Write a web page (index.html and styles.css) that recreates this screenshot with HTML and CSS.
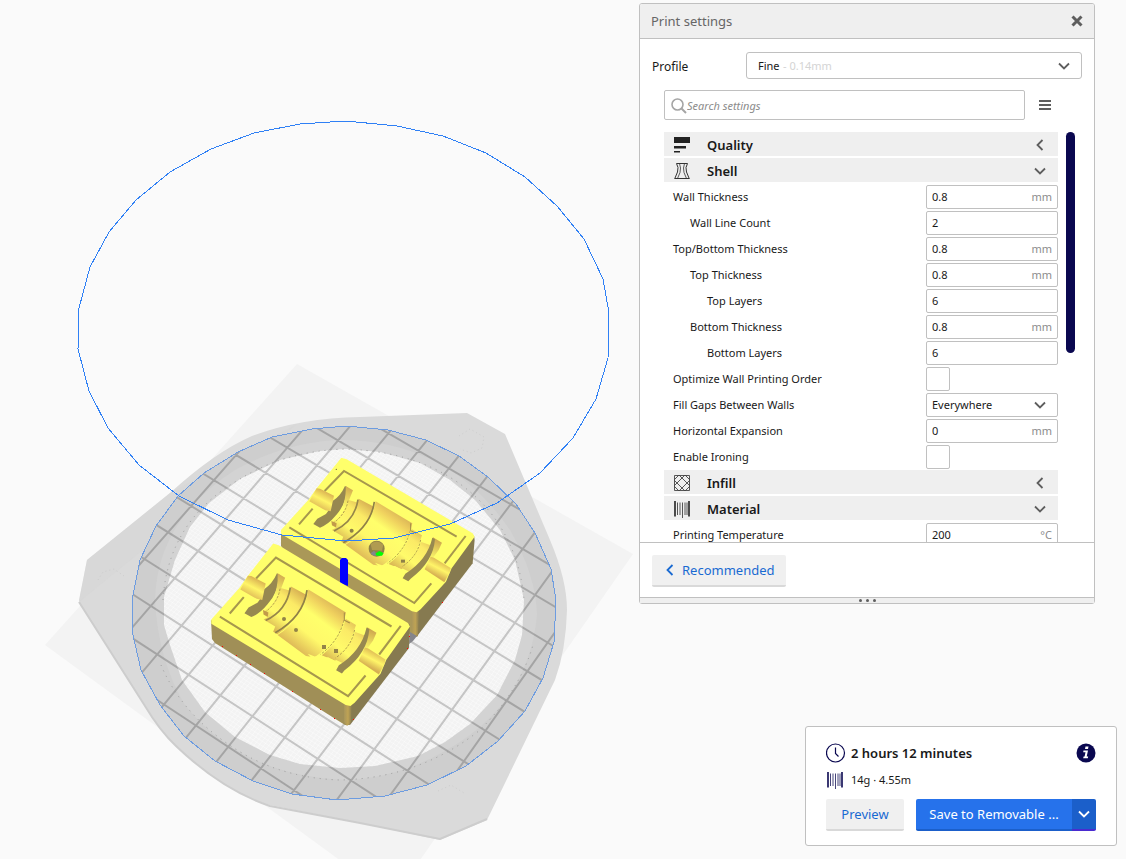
FILE: index.html
```html
<!DOCTYPE html>
<html lang="en">
<head>
<meta charset="utf-8">
<title>Print settings</title>
<link rel="stylesheet" href="styles.css">
</head>
<body>
<svg width="0" height="0" class="sprite" aria-hidden="true">
  <symbol id="chev-down" viewBox="0 0 14 14"><path d="M2 4.500l5 5 5-5" fill="none" stroke="currentColor" stroke-width="1.800"/></symbol>
  <symbol id="chev-left" viewBox="0 0 14 14"><path d="M9.500 2l-5 5 5 5" fill="none" stroke="currentColor" stroke-width="1.800"/></symbol>
  <symbol id="spool" viewBox="0 0 16 18"><path d="M0.200 1h1.600v15.500H0.200zM14.200 1h1.600v15.500h-1.600z" fill="currentColor"/><path d="M3.500 2.500v12.500M6 2.500v12.500M8.500 2.500v15.500M11 2.500v12.500M13 2.500v12.500" stroke="currentColor" stroke-width="1" opacity=".75"/></symbol>
</svg>

<main class="stage">
  <svg class="scene" viewBox="0 0 1126 859" preserveAspectRatio="xMinYMin slice" role="img" aria-label="Build plate with two mould halves">
    <defs>
      <polygon id="bed-shape" points="346,426 388,430 426,440 459,456 488,477 516,504 535,533 551,569 556,600 554,642 543,678 525,711 498,741 466,766 427,785 385,796 337,800 292,794 253,781 215,761 184,736 160,705 141,670 132,631 132,600 140,560 156,526 178,496 204,473 238,452 272,437 312,429"/>
      <polygon id="bed-inner" points="164,597 175,560 190,527 209,503 240,479 280,460 320,451 345,449 380,452 420,463 450,480 475,500 500,530 515,560 524,600 522,635 515,660 497,695 470,724 445,742 418,756 375,766 340,768 300,764 270,755 235,737 205,712 182,680 170,645 164,625"/>
      <clipPath id="bed-clip"><use href="#bed-shape"/></clipPath>
      <clipPath id="inner-clip"><use href="#bed-inner"/></clipPath>
      <linearGradient id="body" gradientUnits="userSpaceOnUse" x1="590" y1="215" x2="485" y2="355">
        <stop offset="0" stop-color="#dcb757"/><stop offset=".14" stop-color="#efd05e"/><stop offset=".36" stop-color="#ffff6b"/><stop offset=".66" stop-color="#fff96a"/><stop offset="1" stop-color="#dcb556"/>
      </linearGradient>
      <linearGradient id="ring-l" gradientUnits="userSpaceOnUse" x1="490" y1="180" x2="405" y2="295">
        <stop offset="0" stop-color="#d8b153"/><stop offset=".28" stop-color="#fbea66"/><stop offset=".65" stop-color="#fffb6a"/><stop offset="1" stop-color="#d2a950"/>
      </linearGradient>
      <linearGradient id="ring-r" gradientUnits="userSpaceOnUse" x1="680" y1="280" x2="590" y2="395">
        <stop offset="0" stop-color="#d9b354"/><stop offset=".28" stop-color="#fbea66"/><stop offset=".65" stop-color="#fffb6a"/><stop offset="1" stop-color="#d4ac51"/>
      </linearGradient>
      <linearGradient id="pin" gradientUnits="userSpaceOnUse" x1="385" y1="160" x2="362" y2="205">
        <stop offset="0" stop-color="#ddb754"/><stop offset=".5" stop-color="#fff568"/><stop offset="1" stop-color="#e2bf59"/>
      </linearGradient>
      <linearGradient id="pin-r" gradientUnits="userSpaceOnUse" x1="724" y1="362" x2="702" y2="405">
        <stop offset="0" stop-color="#ddb754"/><stop offset=".5" stop-color="#fff568"/><stop offset="1" stop-color="#d6af52"/>
      </linearGradient>
      <linearGradient id="tan-l" gradientUnits="userSpaceOnUse" x1="450" y1="143" x2="430" y2="205">
        <stop offset="0" stop-color="#d2aa50"/><stop offset="1" stop-color="#ffff6b"/>
      </linearGradient>
      <linearGradient id="tan-r" gradientUnits="userSpaceOnUse" x1="715" y1="298" x2="695" y2="360">
        <stop offset="0" stop-color="#cba24d"/><stop offset="1" stop-color="#ffff6b"/>
      </linearGradient>
      <linearGradient id="corner"><stop offset="0" stop-color="#a8955a"/><stop offset=".5" stop-color="#bfa354"/><stop offset="1" stop-color="#877b50"/></linearGradient>
      <g id="mould">
        <path d="M424 53L440 58L818 280L824 290L755 385L738 425L662 508L650 517L636 514L243 282L243 270L325 180L350 145Z" fill="#ffff6b"/>
        <g fill="none" stroke="#a6974d" stroke-width="6">
          <path d="M374 153L432 93L770 290"/><path d="M297 253L338 206"/>
          <path d="M268 262L643 489L694 430"/><path d="M734 370L797 288"/>
        </g>
        <path d="M435 138L442 142Q440 190 408 226Q385 254 360 263L340 252L352 236L378 222Q392 205 397 184Q422 168 435 138Z" fill="#978850"/>
        <path d="M437 138L459 151L446 184Q430 216 418 224Q440 180 437 138Z" fill="url(#tan-l)"/>
        <path d="M330 180L350 145L360 146L402 167L392 214L376 211L328 184Z" fill="url(#pin)"/>
        <path d="M446 180L474 188Q455 245 414 268L396 256L398 245Q435 222 446 180Z" fill="url(#ring-l)"/>
        <path d="M444 182Q438 220 402 248" fill="none" stroke="#a28b49" stroke-width="2.500" stroke-dasharray="7 4"/>
        <path d="M394 243L410 250L408 262L396 256Z" fill="#c29a4a"/>
        <path d="M476 176L522 200Q505 270 436 312L424 305L430 290L396 270Q460 240 476 176Z" fill="url(#ring-l)"/>
        <path d="M474 179Q464 244 402 273" fill="none" stroke="#96864a" stroke-width="5"/>
        <path d="M527 184L637 250L632 270Q615 330 545 378L520 374L437 314Q512 268 527 184Z" fill="url(#body)"/>
        <path d="M523 186Q512 262 430 308" fill="none" stroke="#8f8048" stroke-width="5"/>
        <path d="M636 268L666 286L658 310Q640 356 605 388L566 372Q620 332 636 268Z" fill="url(#ring-r)"/>
        <path d="M631 272Q616 332 562 370" fill="none" stroke="#a28b49" stroke-width="2.500" stroke-dasharray="7 4"/>
        <path d="M664 306L692 316Q680 370 630 396L600 382Q646 352 664 306Z" fill="url(#ring-r)"/>
        <path d="M662 300Q652 350 606 380" fill="none" stroke="#a28b49" stroke-width="2.500" stroke-dasharray="7 4"/>
        <path d="M632 250L632 272L648 280" fill="none" stroke="#a28b49" stroke-width="3"/>
        <path d="M525 368L546 376L560 372L570 380L585 378L608 390L602 396L540 384Z" fill="#ffff6b"/>
        <path d="M699 292L726 308L716 330L690 366Q672 400 632 426L620 420Q690 360 699 292Z" fill="url(#tan-r)"/>
        <path d="M697 293L705 298Q700 366 632 416L625 424L608 415L616 401Q682 360 697 293Z" fill="#978850"/>
        <path d="M692 350L702 353L752 384L750 396L733 427L674 388Z" fill="url(#pin-r)"/>
      </g>
    </defs>

    <polygon points="297,364 633,554 393,899 45,645" fill="#f3f3f3"/>
    <path d="M87 560L170 493Q215 452 252 436Q300 418 360 417L467 413L505 434L550 540Q567 580 567 610Q566 650 555 680L487 820L440 840L360 823L270 805Q220 790 175 745Q160 730 145 705L80 604L79 600Z" fill="#dadada"/>
    <path d="M79 602L145 706Q160 731 176 746Q222 790 270 806L360 823L440 839L487 819" fill="none" stroke="#cdcdcd" stroke-width="2"/>
    <path d="M297 424L79 602L87 560L170 493Z" fill="#d6d6d6" opacity=".5"/>

    <use href="#bed-shape" fill="#cecece"/>
    <path d="M155 600Q157 520 235 470Q290 440 345 440Q450 442 510 530Q536 575 537 615Q530 690 470 735Q410 778 345 780Q240 775 185 705Q158 660 155 600Z" fill="#d3d3d3"/>
    <use href="#bed-inner" fill="#f3f3f3"/>
    <g clip-path="url(#inner-clip)"><path id="grid-minor" class="grid-minor"/></g>
    <g clip-path="url(#bed-clip)"><path id="grid-major" class="grid-major"/></g>
    <use href="#bed-shape" class="bed-outline"/>
    <g fill="none" stroke="#9b9b9b" stroke-width="1" stroke-dasharray="1 5">
      <path d="M161 665Q180 710 225 742Q275 778 340 780Q420 778 480 730Q520 690 533 645"/>
      <path d="M163 600Q168 520 240 479Q285 451 345 449Q440 452 490 512Q520 550 524 600"/>
    </g>
    <g fill="none" stroke="#cccccc" stroke-width="1" stroke-dasharray="1 3">
      <path d="M98 580L103 572L114 569L124 576"/><path d="M459 436L470 429L484 437L482 448L471 453L460 449"/><path d="M438 791L451 785L464 793"/>
    </g>

    <g transform="translate(200 440) scale(.3333)">
      <path d="M243 272L243 318L248 325L640 590L652 590L652 510Z" fill="#aa9858"/>
      <path d="M650 510L822 286L824 300L818 370L650 590Z" fill="#867a50"/>
      <path d="M634 500L658 500L654 588L645 591L636 588Z" fill="url(#corner)"/>
      <use href="#mould"/>
      <circle cx="530" cy="326" r="24" fill="#8f8048"/>
      <path d="M512 312Q530 296 550 314L546 332L516 330Z" fill="#b09b50"/>
      <path d="M512 340L522 332L534 346L520 347Z" fill="#85858b"/>
      <path d="M526 341L538 333L551 340L546 347L530 347Z" fill="#00ff00"/>
      <circle cx="455" cy="272" r="6" fill="#8f8048"/><rect x="603" y="359" width="12" height="9" fill="#8f8048"/><circle cx="409" cy="88" r="2" fill="#6f6538"/>
    </g>
    <path d="M340 560L342 558L346 558L348 560L348 586L340 583Z" fill="#0000ff"/>
    <path d="M410 632L417 636L413 641L409 644Z" fill="#85858b"/>
    <path d="M211 620L212 639L215 643L345 725L350 725L350 700Z" fill="#a08f57"/>
    <path d="M348 700L410 624L409 648L350 725Z" fill="#867a50"/>
    <path d="M344 700L352 700L351 722L347 726L344 722Z" fill="url(#corner)"/>
    <g transform="matrix(1.026 0 0 1.050 -77 63)">
      <g transform="translate(200 440) scale(.3333)"><use href="#mould"/></g>
    </g>
    <g fill="#938349"><circle cx="284" cy="619" r="2"/><circle cx="296" cy="630" r="2"/><rect x="322" y="645" width="4" height="4"/><rect x="334" y="649" width="4" height="4"/></g>
    <path d="M222 646.500h1M236 655.500h1M250 664.500h1M264 673.500h1M292 691.500h1M320 709.500h1M334 718.500h1M353 719.500h1M442 602.500h1M409 636.500h1M407 648.500h1" stroke="#ff0000" stroke-width="1"/>
    <polygon class="volume" points="300,124 346,121 397,126 443,136 486,153 525,177 557,206 584,239 603,279 609,313 608,358 596,399 573,438 540,473 497,503 450,524 394,538 346,541 282,535 228,520 179,496 139,465 108,428 89,391 78,349 79,308 90,267 109,232 136,200 170,172 211,149 254,133"/>
  </svg>

  <section class="panel settings" aria-label="Print settings">
    <header class="panel-head">
      <h1>Print settings</h1>
      <button class="icon-btn close" aria-label="Close"><svg width="12" height="12" viewBox="0 0 12 12"><path d="M1.500 1.500l9 9M10.500 1.500l-9 9" stroke="currentColor" stroke-width="3"/></svg></button>
    </header>
    <div class="profile">
      <label for="profile">Profile</label>
      <span class="select-box">
        <select id="profile"><option>Fine</option></select>
        <span class="hint">- 0.14mm</span>
        <svg class="chev"><use href="#chev-down"/></svg>
      </span>
    </div>
    <div class="search-row">
      <label class="search">
        <svg width="16" height="16" viewBox="0 0 16 16" aria-hidden="true"><circle cx="6.500" cy="6.500" r="5.500" fill="none" stroke="#a5a5a5" stroke-width="1.600"/><path d="M10.500 10.500l4.500 4.500" stroke="#a5a5a5" stroke-width="2"/></svg>
        <input type="text" placeholder="Search settings" aria-label="Search settings">
      </label>
      <button class="icon-btn" aria-label="Setting visibility"><svg width="12" height="10" viewBox="0 0 12 10"><path d="M0 1h12M0 5h12M0 9h12" stroke="currentColor" stroke-width="2"/></svg></button>
    </div>
    <div class="list-area">
      <div class="list">
        <button class="category"><svg width="16" height="16" viewBox="0 0 16 16"><path d="M0 0h16v6H0zM0 9h12v2.500H0zM0 14h6v1.500H0z" fill="#222"/></svg><span>Quality</span><svg class="chev"><use href="#chev-left"/></svg></button>
        <button class="category"><svg width="16" height="16" viewBox="0 0 16 16"><g fill="none" stroke="#333" stroke-width="1"><path d="M2.500 .5h11M.5 15.500h15M2.500 .5L4 4.500 3.500 9 .8 15.500M13.500 .5L12 4.500l.5 4.500 2.700 6.500"/><path d="M5.500 .5L6.500 5 6 9.500 3.500 15.500M10.500 .5L9.500 5l.5 4.500 2.500 6" stroke-width=".8"/></g></svg><span>Shell</span><svg class="chev"><use href="#chev-down"/></svg></button>
        <div class="item"><label for="s1">Wall Thickness</label><span class="field"><input id="s1" value="0.8"><span>mm</span></span></div>
        <div class="item l1"><label for="s2">Wall Line Count</label><span class="field"><input id="s2" value="2"></span></div>
        <div class="item"><label for="s3">Top/Bottom Thickness</label><span class="field"><input id="s3" value="0.8"><span>mm</span></span></div>
        <div class="item l1"><label for="s4">Top Thickness</label><span class="field"><input id="s4" value="0.8"><span>mm</span></span></div>
        <div class="item l2"><label for="s5">Top Layers</label><span class="field"><input id="s5" value="6"></span></div>
        <div class="item l1"><label for="s6">Bottom Thickness</label><span class="field"><input id="s6" value="0.8"><span>mm</span></span></div>
        <div class="item l2"><label for="s7">Bottom Layers</label><span class="field"><input id="s7" value="6"></span></div>
        <div class="item"><label for="s8">Optimize Wall Printing Order</label><span class="cell"><input type="checkbox" id="s8"></span></div>
        <div class="item"><label for="s9">Fill Gaps Between Walls</label><span class="field"><select id="s9"><option>Everywhere</option></select><svg class="chev"><use href="#chev-down"/></svg></span></div>
        <div class="item"><label for="s10">Horizontal Expansion</label><span class="field"><input id="s10" value="0"><span>mm</span></span></div>
        <div class="item"><label for="s11">Enable Ironing</label><span class="cell"><input type="checkbox" id="s11"></span></div>
        <button class="category"><svg width="16" height="16" viewBox="0 0 16 16"><g fill="none" stroke="#444" stroke-width=".9"><path d="M.5.5h15v15H.5z"/><path d="M0 5L5 0M0 11L11 0M5 16L16 5M11 16l5-5M0 5l11 11M0 11l5 5M5 0l11 11M11 0l5 5"/></g></svg><span>Infill</span><svg class="chev"><use href="#chev-left"/></svg></button>
        <button class="category"><svg width="16" height="18" color="#222"><use href="#spool"/></svg><span>Material</span><svg class="chev"><use href="#chev-down"/></svg></button>
        <div class="item"><label for="s12">Printing Temperature</label><span class="field"><input id="s12" value="200"><span>°C</span></span></div>
      </div>
      <div class="scroll-thumb"></div>
    </div>
    <footer class="panel-foot">
      <button class="btn light"><svg class="chev"><use href="#chev-left"/></svg>Recommended</button>
    </footer>
    <div class="grip"><i></i><i></i><i></i></div>
  </section>

  <section class="panel job" aria-label="Print job">
    <div class="time">
      <svg width="20" height="20" viewBox="0 0 20 20"><circle cx="9.500" cy="10" r="9" fill="none" stroke="#0a0850" stroke-width="1.200"/><path d="M9.500 4.500v6l3 3" fill="none" stroke="#0a0850" stroke-width="1.200"/></svg>
      <strong>2 hours 12 minutes</strong>
      <button class="icon-btn" aria-label="Details"><svg width="20" height="20" viewBox="0 0 20 20"><circle cx="10" cy="10" r="9.500" fill="#0a0850"/><path d="M9.500 3.500h3l-.5 2.500H9zM7.500 7.500H12l-1.300 6h1.500l-.4 1.700H7.200l.4-1.700h1L9.500 9.200H7.200z" fill="#fff"/></svg></button>
    </div>
    <div class="usage"><svg width="16" height="18" color="#0a0850"><use href="#spool"/></svg><span>14g · 4.55m</span></div>
    <div class="actions">
      <button class="btn light">Preview</button>
      <div class="split"><button class="btn primary">Save to Removable ...</button><button class="btn more" aria-label="More outputs"><svg class="chev"><use href="#chev-down"/></svg></button></div>
    </div>
  </section>
</main>
<script src="grid.js"></script>
</body>
</html>
```
FILE: styles.css
```css
* { box-sizing: border-box; }
body {
  margin: 0;
  background: #fafafa;
  color: #191919;
  font: 11px/16px "Noto Sans", "Open Sans", sans-serif;
}
button, input, select { font: inherit; color: inherit; margin: 0; }
button { border: 0; padding: 0; background: none; cursor: pointer; }
.sprite { position: absolute; }
svg { display: block; flex: none; }

.stage {
  position: relative;
  min-height: 100vh;
  display: flex;
  flex-direction: column;
  align-items: flex-end;
  justify-content: space-between;
  padding: 3px 9px 13px;
  overflow: hidden;
}
.scene { position: absolute; inset: 0; width: 100%; height: 100%; }
.grid-minor { fill: none; stroke: #fff; stroke-opacity: .4; stroke-width: 1; }
.grid-major { fill: none; stroke: #000; stroke-opacity: .2; stroke-width: 2; }
.bed-outline { fill: none; stroke: #6d9ce0; stroke-width: 1; shape-rendering: crispEdges; }
.volume { fill: none; stroke: #2f80f5; stroke-width: 1; shape-rendering: crispEdges; }

.panel {
  position: relative;
  background: #fff;
  border: 1px solid #c0c0c0;
  border-radius: 3px;
}
.settings { width: 456px; margin-right: 22px; }
.panel-head {
  display: flex;
  align-items: center;
  justify-content: space-between;
  height: 35px;
  padding: 0 11px;
  background: #efefef;
  border-bottom: 1px solid #c0c0c0;
  border-radius: 2px 2px 0 0;
}
h1 { margin: 0; font-size: 13px; font-weight: 400; color: #666; }
.icon-btn { color: #5e5e5e; }
.chev { width: 14px; height: 14px; color: #5e5e5e; }

.profile {
  display: flex;
  align-items: center;
  padding: 13px 12px 0;
}
.profile label { flex: 0 0 94px; padding-top: 2px; font-size: 12px; }
.select-box {
  flex: 1;
  display: flex;
  align-items: center;
  position: relative;
}
.select-box select {
  width: 100%;
  height: 27px;
  padding: 0 11px;
  appearance: none;
  background: #fff;
  border: 1px solid #c0c0c0;
  border-radius: 3px;
}
.hint { position: absolute; left: 37px; color: #d4d4d4; pointer-events: none; }
.select-box .chev { position: absolute; right: 11px; pointer-events: none; }

.search-row {
  display: flex;
  align-items: center;
  gap: 14px;
  padding: 11px 43px 12px 24px;
}
.search {
  flex: 1;
  display: flex;
  align-items: center;
  height: 30px;
  padding: 1px 6px 0;
  border: 1px solid #c0c0c0;
  border-radius: 2px;
}
.search input {
  flex: 1;
  min-width: 0;
  border: 0;
  padding: 0;
  background: none;
  outline: 0;
}
.search input::placeholder { color: #8c8c8c; font-style: italic; }

.list-area {
  display: flex;
  gap: 8px;
  height: 410px;
  padding: 0 19px 0 24px;
  overflow: hidden;
}
.list { flex: 1; }
.scroll-thumb { width: 9px; height: 221px; border-radius: 5px; background: #0a0850; }
.category {
  display: flex;
  align-items: center;
  width: 100%;
  height: 24px;
  margin-bottom: 2px;
  padding: 1px 11px 0 10px;
  background: #efefef;
  text-align: left;
}
.category span { flex: 1; margin-left: 17px; padding-top: 1px; font-size: 13px; font-weight: 600; }
.item {
  display: flex;
  align-items: center;
  height: 26px;
  padding-left: 9px;
}
.l1 { padding-left: 26px; }
.l2 { padding-left: 43px; }
.item label { flex: 1; }
.field, .cell { display: flex; align-items: center; width: 132px; height: 24px; }
.field {
  padding: 0 5px;
  border: 1px solid #c0c0c0;
  border-radius: 2px;
  background: #fff;
}
.field input, .field select {
  flex: 1;
  min-width: 0;
  border: 0;
  padding: 0;
  background: none;
  appearance: none;
  outline: 0;
}
.field span { color: #8c8c8c; }
.field .chev { margin-right: 5px; }
.cell input {
  width: 24px;
  height: 24px;
  appearance: none;
  background: #fff;
  border: 1px solid #c0c0c0;
  border-radius: 2px;
}

.panel-foot { padding: 12px 12px 10px; border-top: 1px solid #c0c0c0; }
.btn {
  display: flex;
  align-items: center;
  justify-content: center;
  height: 32px;
  font-size: 13px;
  border-bottom: 2px solid;
  border-radius: 2px;
}
.light { background: #f0f0f0; border-color: #d9d9d9; color: #196ad2; }
.panel-foot .btn { gap: 5px; padding: 0 11px; }
.panel-foot .chev { color: #196ad2; }
.grip {
  display: flex;
  align-items: center;
  justify-content: center;
  gap: 4px;
  height: 6px;
  background: #efefef;
  border-top: 1px solid #c0c0c0;
}
.grip i { width: 3px; height: 3px; border-radius: 50%; background: #5e5e5e; }

.job { width: 312px; padding: 15px 20px 14px; }
.time, .usage { display: flex; align-items: center; }
.time { gap: 5px; height: 22px; }
.time strong { flex: 1; font-size: 13px; font-weight: 600; }
.usage { gap: 8px; height: 18px; margin: 7px 0 10px; padding-left: 1px; }
.actions { display: flex; gap: 12px; }
.actions > .light { flex: 0 0 78px; }
.split { flex: 1; display: flex; }
.primary { flex: 1; background: #2672eb; border-color: #1b5fca; color: #fff; border-radius: 2px 0 0 2px; }
.more { width: 24px; background: #1b5fca; border-color: #4a2bd0; border-radius: 0 2px 2px 0; }
.more .chev { color: #fff; }
```
FILE: grid.js
```js
// Projects a build-plate cell coordinate onto the view.
function project(u, v) {
  const s = (u + 8) / 8;
  const t = (v + 4) / 6;
  const w = 1 - 0.0455 * s - 0.0587 * t;
  const x = (223.36 * s - 145.4 * t + 287.3) / w;
  const y = (120.2 * s + 122.7 * t + 447.7) / w;
  return x.toFixed(1) + " " + y.toFixed(1);
}

function gridPath(step) {
  let d = "";
  for (let i = -14; i <= 8; i += step) {
    d += "M" + project(i, -12) + "L" + project(i, 8);
    d += "M" + project(-16, i) + "L" + project(8, i);
  }
  return d;
}

document.getElementById("grid-major").setAttribute("d", gridPath(1));
document.getElementById("grid-minor").setAttribute("d", gridPath(0.1));
```
